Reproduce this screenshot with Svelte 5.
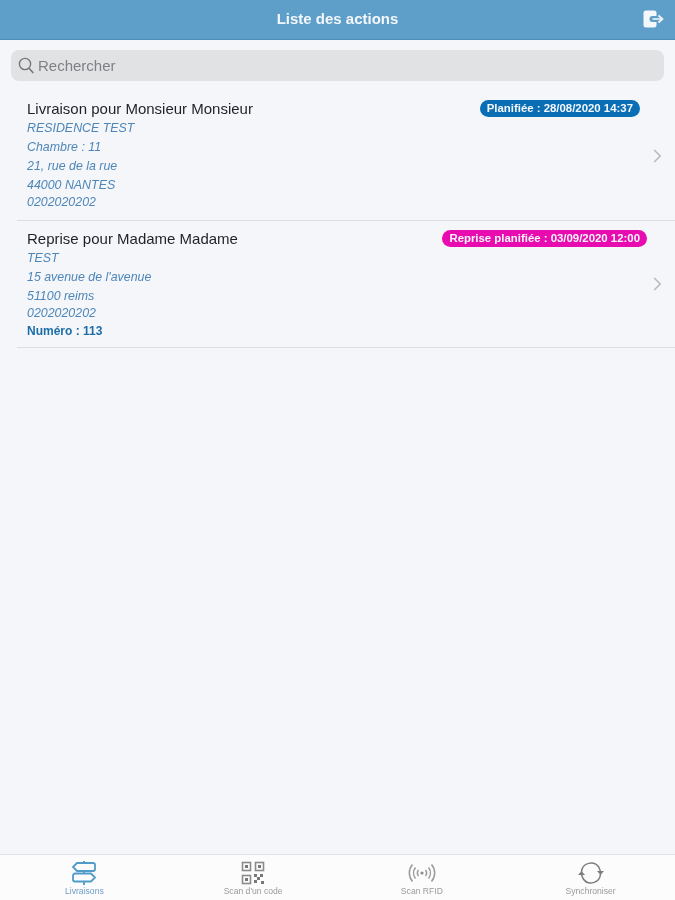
<script>
  const actions = [
    {
      title: 'Livraison pour Monsieur Monsieur',
      badge: 'Planifiée : 28/08/2020 14:37',
      kind: 'delivery',
      lines: ['RESIDENCE TEST', 'Chambre : 11', '21, rue de la rue', '44000 NANTES'],
      phone: '0202020202'
    },
    {
      title: 'Reprise pour Madame Madame',
      badge: 'Reprise planifiée : 03/09/2020 12:00',
      kind: 'pickup',
      lines: ['TEST', '15 avenue de l\'avenue', '51100 reims'],
      phone: '0202020202',
      number: 'Numéro : 113'
    }
  ];

  const tabs = [
    { id: 'deliveries', label: 'Livraisons', active: true },
    { id: 'qr', label: 'Scan d\'un code' },
    { id: 'rfid', label: 'Scan RFID' },
    { id: 'sync', label: 'Synchroniser' }
  ];
</script>

<main class="page">
  <header class="header">
    <h1>Liste des actions</h1>
    <button class="logout" aria-label="Déconnexion">
      <svg width="22" height="18" viewBox="0 0 22 18">
        <path d="M3 0.5h8a2.5 2.5 0 0 1 2.500 2.500v3h-4a3 3 0 0 0 0 6h4v3a2.500 2.500 0 0 1-2.500 2.500h-8a2.500 2.500 0 0 1-2.500-2.500v-12a2.500 2.500 0 0 1 2.500-2.500z" fill="#f4f7fb" />
        <path d="M9.500 9h8M15.500 5.500l4 3.500-4 3.500" fill="none" stroke="#f4f7fb" stroke-width="1.700" />
      </svg>
    </button>
  </header>

  <div class="search">
    <svg width="16" height="17" viewBox="0 0 16 17">
      <circle cx="7" cy="7" r="5.600" fill="none" stroke="#77777b" stroke-width="1.400" />
      <path d="M11 11.200l4.300 4.800" stroke="#77777b" stroke-width="1.600" />
    </svg>
    <span>Rechercher</span>
  </div>

  <ul class="list">
    {#each actions as action}
      <li class="row">
        <div class="content">
          <div class="top">
            <h2>{action.title}</h2>
            <span class="badge {action.kind}">{action.badge}</span>
          </div>
          {#each action.lines as line}
            <p class="line">{line}</p>
          {/each}
          <p class="line phone">{action.phone}</p>
          {#if action.number}
            <p class="number">{action.number}</p>
          {/if}
        </div>
        <svg class="chevron" width="9" height="14" viewBox="0 0 9 14">
          <path d="M1.200 1l6 6-6 6" fill="none" stroke="#b9b9bd" stroke-width="1.600" />
        </svg>
      </li>
    {/each}
  </ul>

  <nav class="tabs">
    {#each tabs as tab}
      <div class="tab" class:active={tab.active}>
        {#if tab.id === 'deliveries'}
          <svg width="26" height="24" viewBox="0 0 26 24" fill="none" stroke="#4f9bc9" stroke-width="1.800">
            <path d="M6 2h16a2 2 0 0 1 2 2v4a2 2 0 0 1-2 2h-16l-4-4z" />
            <path d="M20 12.500h-16a2 2 0 0 0-2 2v4a2 2 0 0 0 2 2h16l4-4z" />
            <path d="M13 0v2M13 10v2.500M13 20.500v3.500" />
          </svg>
        {:else if tab.id === 'qr'}
          <svg width="24" height="24" viewBox="0 0 24 24">
            <g fill="none" stroke="#8b8b8b" stroke-width="1.600">
              <rect x="1.500" y="1.500" width="8" height="8" />
              <rect x="14.500" y="1.500" width="8" height="8" />
              <rect x="1.500" y="14.500" width="8" height="8" />
            </g>
            <g fill="#777">
              <rect x="4" y="4" width="3" height="3" />
              <rect x="17" y="4" width="3" height="3" />
              <rect x="4" y="17" width="3" height="3" />
              <rect x="13" y="13" width="3" height="3" />
              <rect x="19" y="13" width="3" height="3" />
              <rect x="16" y="16" width="3" height="3" />
              <rect x="13" y="19" width="3" height="3" />
              <rect x="20" y="20" width="3" height="3" />
            </g>
          </svg>
        {:else if tab.id === 'rfid'}
          <svg width="28" height="24" viewBox="0 0 28 24" fill="none" stroke="#9a9a9a" stroke-width="1.500">
            <circle cx="14" cy="12" r="1.600" fill="#8b8b8b" stroke="none" />
            <path d="M10.500 9a5 5 0 0 0 0 6M17.500 9a5 5 0 0 1 0 6" />
            <path d="M7.500 6.500a9 9 0 0 0 0 11M20.500 6.500a9 9 0 0 1 0 11" />
            <path d="M4.500 3.500a13 13 0 0 0 0 17M23.500 3.500a13 13 0 0 1 0 17" />
          </svg>
        {:else}
          <svg width="26" height="24" viewBox="0 0 26 24" fill="none" stroke="#7d7d7d" stroke-width="1.500">
            <path d="M3.500 11a9.500 9.500 0 0 1 17.500-4.500l1.500 4" />
            <path d="M22.500 13a9.500 9.500 0 0 1-17.500 4.500l-1.500-4" />
            <path d="M19 10h7l-3.500 4z" fill="#7d7d7d" stroke="none" />
            <path d="M0 14h7l-3.500-4z" fill="#7d7d7d" stroke="none" />
          </svg>
        {/if}
        <span>{tab.label}</span>
      </div>
    {/each}
  </nav>
</main>

<style>
  :global(body) {
    background: #f4f6fa;
  }

  .page {
    display: flex;
    flex-direction: column;
    height: 900px;
    background: #f4f6fa;
    font-family: "Liberation Sans", Arial, sans-serif;
    overflow: hidden;
    filter: blur(0.4px);
  }

  .header {
    position: relative;
    flex: none;
    display: flex;
    align-items: center;
    justify-content: center;
    height: 36px;
    padding-bottom: 3px;
    box-sizing: content-box;
    background: #5e9fc9;
    border-bottom: 1px solid #4f8cb6;
  }

  h1 {
    margin: 0;
    font-size: 15px;
    font-weight: 700;
    color: #f3f7fb;
  }

  .logout {
    position: absolute;
    right: 10px;
    top: 10px;
    padding: 0;
    border: none;
    background: none;
    line-height: 0;
  }

  .search {
    flex: none;
    display: flex;
    align-items: center;
    gap: 4px;
    height: 31px;
    margin: 10px 11px 0;
    padding: 0 0 1px 7px;
    box-sizing: border-box;
    background: #e1e2e4;
    border-radius: 8px;
    color: #808084;
    font-size: 15px;
  }

  .list {
    flex: 1;
    margin: 10px 0 0;
    padding: 0 0 0 17px;
    list-style: none;
  }

  .row {
    position: relative;
    padding: 8px 0 10px 10px;
    border-bottom: 1px solid #dcdde0;
  }

  .content {
    padding-right: 28px;
  }

  .top {
    display: flex;
    align-items: center;
    justify-content: space-between;
    height: 18px;
    margin-bottom: 2px;
  }

  h2 {
    margin: 0;
    font-size: 15px;
    font-weight: 400;
    color: #1f2126;
  }

  .badge {
    padding: 1px 7px;
    border-radius: 9px;
    font-size: 11.4px;
    font-weight: 700;
    line-height: 15px;
    color: #f4f7fb;
  }

  .badge.delivery {
    background: #0a6eb4;
    margin-right: 7px;
  }

  .badge.pickup {
    background: #e80cb0;
  }

  .line {
    margin: 0;
    font-size: 12.4px;
    font-style: italic;
    line-height: 19px;
    color: #4f86b8;
  }

  .line.phone {
    line-height: 15px;
  }

  .number {
    margin: 0;
    padding-top: 4px;
    font-size: 12px;
    font-weight: 700;
    line-height: 12px;
    color: #1c6ea8;
  }

  .chevron {
    position: absolute;
    right: 13px;
    top: 50%;
    transform: translateY(-50%);
  }

  .tabs {
    flex: none;
    display: grid;
    grid-template-columns: repeat(4, 1fr);
    height: 45px;
    background: #fcfcfd;
    border-top: 1px solid #e2e3e6;
  }

  .tab {
    display: flex;
    flex-direction: column;
    align-items: center;
    padding-top: 6px;
    color: #9a9a9a;
    font-size: 8.6px;
    line-height: 11px;
  }

  .tab svg {
    flex: none;
  }

  .tab span {
    margin-top: 1px;
  }

  .tab.active {
    color: #6f9cc6;
  }
</style>
